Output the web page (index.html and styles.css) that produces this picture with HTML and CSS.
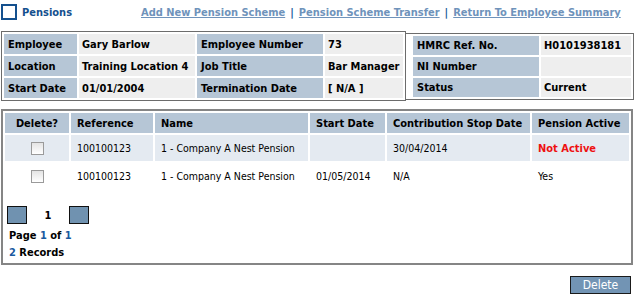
FILE: index.html
```html
<!DOCTYPE html>
<html>
<head>
<meta charset="utf-8">
<link rel="stylesheet" href="styles.css">
</head>
<body>
<div class="page">
  <div class="topbar">
    <div class="title"><span class="title-box"></span>Pensions</div>
    <div class="links">
      <a href="#">Add New Pension Scheme</a><span class="sep">|</span><a href="#">Pension Scheme Transfer</a><span class="sep">|</span><a href="#">Return To Employee Summary</a>
    </div>
  </div>

  <div class="info">
    <table class="info-left">
      <tr>
        <td class="lbl c1">Employee</td><td class="val c2">Gary Barlow</td>
        <td class="lbl c3">Employee Number</td><td class="val c4">73</td>
      </tr>
      <tr>
        <td class="lbl">Location</td><td class="val">Training Location 4</td>
        <td class="lbl">Job Title</td><td class="val">Bar Manager</td>
      </tr>
      <tr>
        <td class="lbl">Start Date</td><td class="val">01/01/2004</td>
        <td class="lbl">Termination Date</td><td class="val">[ N/A ]</td>
      </tr>
    </table>
    <table class="info-right">
      <tr><td class="lbl c5">HMRC Ref. No.</td><td class="val c6">H0101938181</td></tr>
      <tr><td class="lbl">NI Number</td><td class="val"></td></tr>
      <tr><td class="lbl">Status</td><td class="val">Current</td></tr>
    </table>
  </div>

  <div class="grid">
    <table class="records">
      <thead>
        <tr>
          <th class="g1 center">Delete?</th>
          <th class="g2">Reference</th>
          <th class="g3">Name</th>
          <th class="g4">Start Date</th>
          <th class="g5">Contribution Stop Date</th>
          <th class="g6">Pension Active</th>
        </tr>
      </thead>
      <tbody>
        <tr class="alt">
          <td class="center"><span class="chk"></span></td>
          <td>100100123</td>
          <td>1 - Company A Nest Pension</td>
          <td></td>
          <td>30/04/2014</td>
          <td class="inactive">Not Active</td>
        </tr>
        <tr>
          <td class="center"><span class="chk"></span></td>
          <td>100100123</td>
          <td>1 - Company A Nest Pension</td>
          <td>01/05/2014</td>
          <td>N/A</td>
          <td>Yes</td>
        </tr>
      </tbody>
    </table>
    <div class="pager">
      <div class="pager-nav"><span class="pg-btn"></span><span class="pg-num">1</span><span class="pg-btn"></span></div>
      <div class="pager-line first">Page <span class="hl">1</span> of <span class="hl">1</span></div>
      <div class="pager-line"><span class="hl">2</span> Records</div>
    </div>
  </div>

  <div class="actions">
    <button class="btn" type="button">Delete</button>
  </div>
</div>
</body>
</html>
```

FILE: styles.css
```css
html, body {
  margin: 0;
  padding: 0;
  background: #ffffff;
}
body {
  font-family: "DejaVu Sans Condensed", "DejaVu Sans", sans-serif;
  font-size: 11px;
  color: #000;
}
.page {
  width: 636px;
}
.topbar {
  display: grid;
  grid-template-columns: 141px auto;
  height: 31px;
}
.title {
  display: flex;
  align-items: center;
  padding: 4px 0 0 1px;
  font-weight: bold;
  font-size: 11px;
  color: #14508e;
  height: 16px;
}
.title-box {
  width: 12px;
  height: 12px;
  border: 2px solid #14508e;
  margin-right: 5px;
}
.links {
  padding-top: 6px;
  font-weight: bold;
  font-size: 11px;
  white-space: nowrap;
}
.links a {
  color: #6f93bb;
  text-decoration: underline;
}
.sep {
  color: #1e5c9c;
  margin: 0 5px;
}
.info {
  display: flex;
  align-items: flex-start;
  width: 633px;
  margin-left: 1px;
}
table {
  border-collapse: separate;
  font-size: 11px;
}
.info-left {
  border: 1px solid #6c6c6c;
  border-spacing: 2px;
}
.info-right {
  border: 1px solid #6c6c6c;
  border-left: none;
  border-spacing: 2px;
  margin-top: 2px;
  padding-left: 5px;
  flex: 1;
}
.info td {
  height: 20px;
  padding: 0 3px;
  font-weight: bold;
  white-space: nowrap;
}
.info-right td {
  height: 19px;
}
.info .lbl {
  background: #b6c6d6;
  padding-left: 4px;
}
.info .val {
  background: #eeeeee;
}
.c1 { width: 66px; }
.c2 { width: 110px; }
.c3 { width: 119px; }
.c4 { width: 72px; }
.c5 { width: 119px; }
.grid {
  margin: 8px 0 0 1px;
  width: 628px;
  border: 2px solid #858585;
  height: 152px;
}
.records {
  width: 100%;
  border-spacing: 2px;
}
.records th {
  background: #b6c6d6;
  height: 20px;
  padding: 0 6px;
  text-align: left;
  font-weight: bold;
  white-space: nowrap;
}
.records td {
  height: 26px;
  padding: 0 6px;
  white-space: nowrap;
  font-size: 10.5px;
}
.records tr.alt td {
  background: #e4eaf1;
}
.records .center { text-align: center; }
.g1 { width: 52px; }
.g2 { width: 70px; }
.g3 { width: 141px; }
.g4 { width: 63px; }
.g5 { width: 131px; }
.chk {
  display: inline-block;
  width: 11px;
  height: 11px;
  border: 1px solid #9a9a9a;
  background: linear-gradient(#e4e4e4, #ffffff);
  vertical-align: middle;
}
.records td.inactive {
  color: #ee1111;
  font-weight: bold;
  font-size: 11px;
}
.pager {
  padding: 15px 0 0 4px;
  font-weight: bold;
}
.pager-nav {
  display: flex;
  align-items: center;
  height: 18px;
}
.pg-btn {
  width: 18px;
  height: 16px;
  border: 1px solid #111;
  background: #7092b0;
}
.pg-num {
  width: 42px;
  text-align: center;
}
.pager-line {
  padding-left: 2px;
  margin-top: 4px;
  line-height: 13px;
}
.pager-line.first {
  margin-top: 5px;
}
.hl { color: #1a5aa0; }
.actions {
  display: flex;
  justify-content: flex-end;
  padding: 11px 5px 0 0;
}
.btn {
  width: 61px;
  height: 18px;
  border: 1px solid #1a1a1a;
  background: #7294b4;
  color: #fff;
  font-family: inherit;
  font-size: 12px;
  padding: 0;
  line-height: 16px;
}
```
